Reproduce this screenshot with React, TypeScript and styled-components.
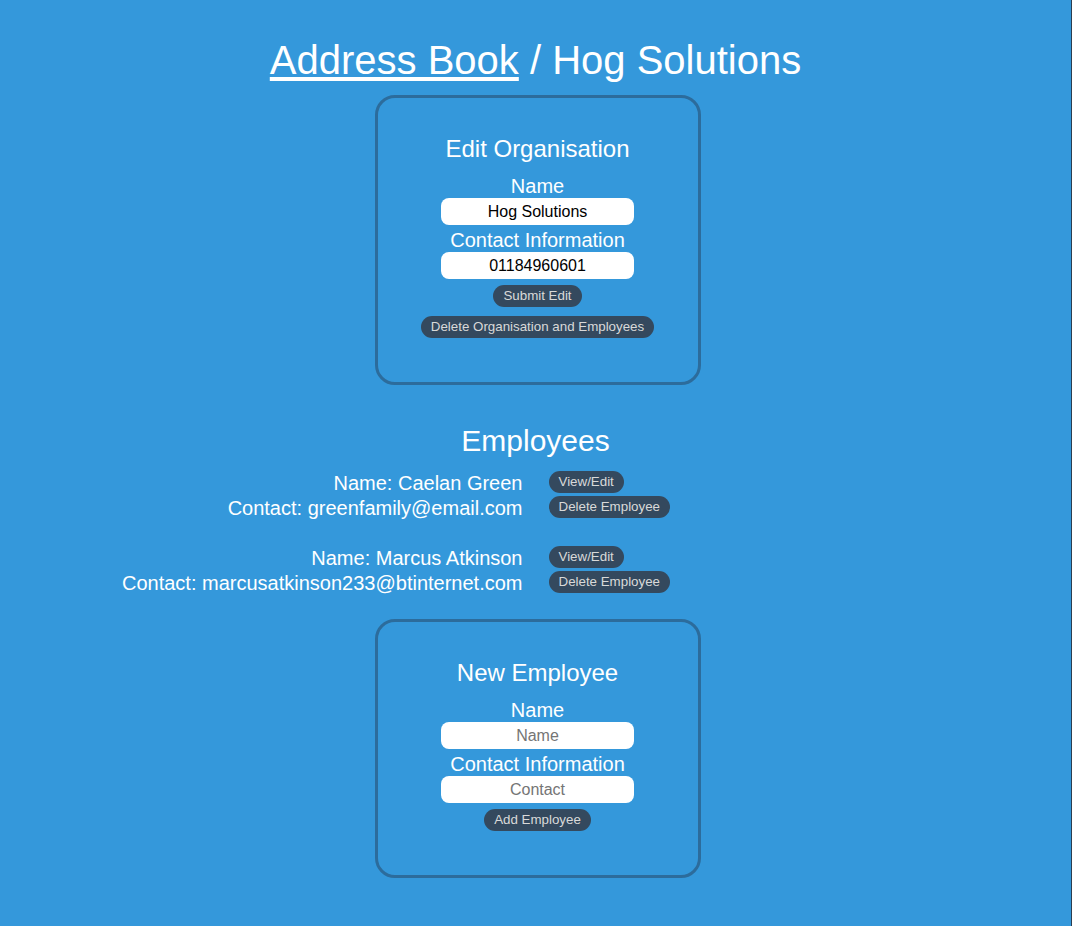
import React from "react";
import styled, { createGlobalStyle } from "styled-components";

// === Global styles ===

const GlobalStyle = createGlobalStyle`
  html {
    background-color: #3498db;
    border-right: 1px solid #2c3e50;
    min-height: 100%;
  }

  body {
    margin: 0;
    font-family: "Liberation Sans", Arial, sans-serif;
    color: #ffffff;
    background-color: #3498db;
  }
`;

// === Styles ===

const Page = styled.main`
  display: flex;
  flex-direction: column;
  align-items: center;
  padding: 37px 0 48px;
`;

const Title = styled.h1`
  margin: 0 0 12px;
  font-size: 40px;
  font-weight: 400;
  line-height: 46px;
  color: #ffffff;
`;

const TitleLink = styled.a`
  color: #ffffff;
  text-decoration: underline;
  text-underline-offset: 3px;
  cursor: pointer;
`;

const Card = styled.section`
  box-sizing: border-box;
  width: 326px;
  margin-left: 4px;
  padding: 37px 0 44px;
  border: 3px solid #2c6c9c;
  border-radius: 20px;
  display: flex;
  flex-direction: column;
  align-items: center;
`;

const CardTitle = styled.h2`
  margin: 0 0 12px;
  font-size: 24px;
  font-weight: 400;
  line-height: 28px;
`;

const FieldLabel = styled.label<{ $first?: boolean }>`
  display: block;
  margin-top: ${(props) => (props.$first ? "0" : "4px")};
  font-size: 20px;
  line-height: 23px;
  text-align: center;
`;

const TextInput = styled.input`
  box-sizing: border-box;
  width: 193px;
  height: 27px;
  border: none;
  border-radius: 8px;
  background-color: #ffffff;
  font-family: "Liberation Sans", Arial, sans-serif;
  font-size: 16px;
  color: #000000;
  text-align: center;
  outline: none;

  &::placeholder {
    color: #757575;
  }
`;

const PillButton = styled.button<{ $gap?: number }>`
  box-sizing: border-box;
  height: 22px;
  margin-top: ${(props) => props.$gap ?? 0}px;
  padding: 0 10px;
  border: none;
  border-radius: 11px;
  background-color: #34495e;
  color: #d9d9d9;
  font-family: "Liberation Sans", Arial, sans-serif;
  font-size: 13.33px;
  line-height: 22px;
  white-space: nowrap;
  cursor: pointer;
`;

const SectionTitle = styled.h2`
  margin: 39px 0 13px;
  font-size: 30px;
  font-weight: 400;
  line-height: 34px;
`;

const EmployeeList = styled.div`
  width: 100%;
  display: flex;
  flex-direction: column;
  gap: 25px;
  margin-bottom: 23px;
`;

const EmployeeEntry = styled.div`
  display: grid;
  grid-template-columns: 1fr 1fr;
  grid-auto-rows: 25px;
  column-gap: 26px;
  align-items: center;
`;

const EntryText = styled.span`
  font-size: 20px;
  line-height: 25px;
  text-align: right;
  white-space: nowrap;
`;

const EntryAction = styled.div`
  align-self: start;
  display: flex;
  justify-content: flex-start;
`;

// === Data ===

const employees = [
  { name: "Caelan Green", contact: "greenfamily@email.com" },
  { name: "Marcus Atkinson", contact: "marcusatkinson233@btinternet.com" },
];

// === App ===

const App: React.FC = () => {
  return (
    <>
      <GlobalStyle />
      <Page>
        <Title>
          <TitleLink>Address Book</TitleLink> / Hog Solutions
        </Title>

        {/* Edit organisation form */}
        <Card>
          <CardTitle>Edit Organisation</CardTitle>
          <FieldLabel $first htmlFor="org-name">
            Name
          </FieldLabel>
          <TextInput id="org-name" defaultValue="Hog Solutions" />
          <FieldLabel htmlFor="org-contact">Contact Information</FieldLabel>
          <TextInput id="org-contact" defaultValue="01184960601" />
          <PillButton $gap={6}>Submit Edit</PillButton>
          <PillButton $gap={9}>Delete Organisation and Employees</PillButton>
        </Card>

        <SectionTitle>Employees</SectionTitle>
        <EmployeeList>
          {employees.map((emp) => (
            <EmployeeEntry key={emp.contact}>
              <EntryText>Name: {emp.name}</EntryText>
              <EntryAction>
                <PillButton>View/Edit</PillButton>
              </EntryAction>
              <EntryText>Contact: {emp.contact}</EntryText>
              <EntryAction>
                <PillButton>Delete Employee</PillButton>
              </EntryAction>
            </EmployeeEntry>
          ))}
        </EmployeeList>

        {/* New employee form */}
        <Card>
          <CardTitle>New Employee</CardTitle>
          <FieldLabel $first htmlFor="emp-name">
            Name
          </FieldLabel>
          <TextInput id="emp-name" placeholder="Name" />
          <FieldLabel htmlFor="emp-contact">Contact Information</FieldLabel>
          <TextInput id="emp-contact" placeholder="Contact" />
          <PillButton $gap={6}>Add Employee</PillButton>
        </Card>
      </Page>
    </>
  );
};

export default App;
